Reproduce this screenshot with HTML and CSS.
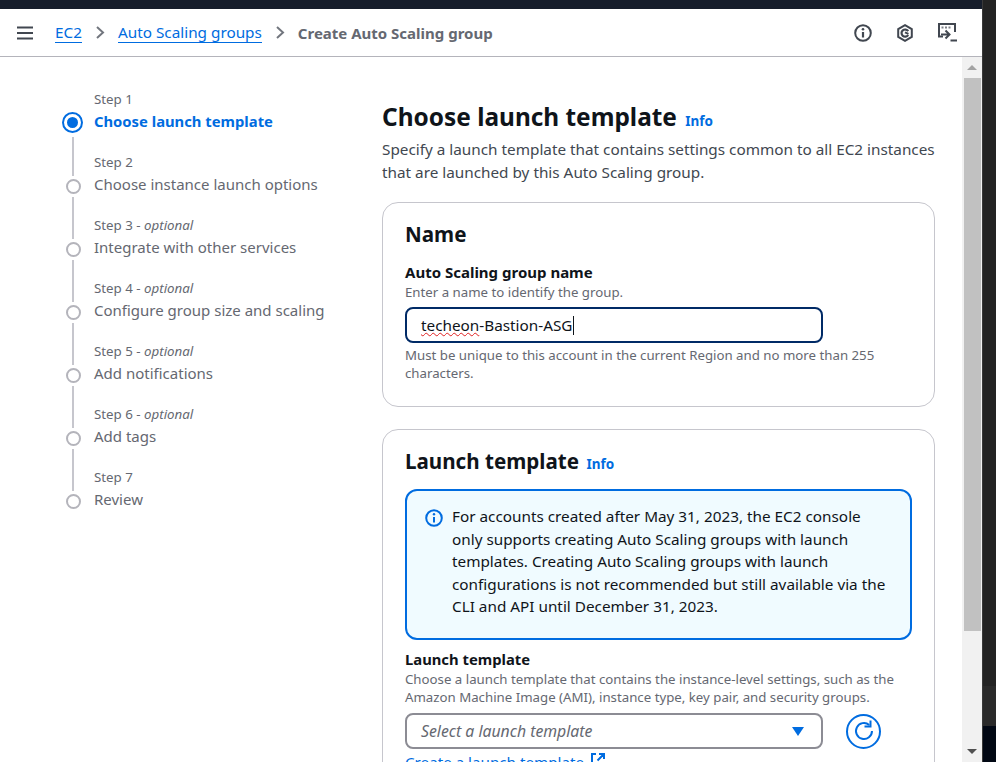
FILE: index.html
```html
<!DOCTYPE html>
<html lang="en">
<head>
    <meta charset="UTF-8">
    <title>Create Auto Scaling group</title>
    <link rel="stylesheet" href="styles.css">
</head>
<body>
    <div class="shell">
        <div class="window">
            <div class="topstrip"></div>
            <div class="console">
                <header class="crumbbar">
                    <svg class="menu-icon" width="16" height="14" viewBox="0 0 16 14"><path d="M0 1.500h16M0 7h16M0 12.500h16" stroke="#414750" stroke-width="2"/></svg>
                    <a class="crumb" href="#">EC2</a>
                    <svg class="chev" width="9" height="13" viewBox="0 0 9 13"><path d="M1 1l6 5.500-6 5.500" fill="none" stroke="#72767e" stroke-width="2"/></svg>
                    <a class="crumb" href="#">Auto Scaling groups</a>
                    <svg class="chev" width="9" height="13" viewBox="0 0 9 13"><path d="M1 1l6 5.500-6 5.500" fill="none" stroke="#72767e" stroke-width="2"/></svg>
                    <span class="crumb-current">Create Auto Scaling group</span>
                    <div class="tools">
                        <svg width="18" height="18" viewBox="0 0 18 18"><circle cx="9" cy="9" r="7.800" fill="none" stroke="#414750" stroke-width="2"/><path d="M9 8v5.500" stroke="#414750" stroke-width="2.200"/><circle cx="9" cy="5.200" r="1.300" fill="#414750"/></svg>
                        <svg width="16" height="18" viewBox="0 0 16 18"><path d="M8 1.200l6.800 3.900v7.800L8 16.800l-6.800-3.900V5.100z" fill="none" stroke="#414750" stroke-width="2"/><path d="M11.200 7.200A3.600 3.600 0 1 0 11.200 11" fill="none" stroke="#414750" stroke-width="2.200"/><path d="M8 8.300l3.500 1.500" stroke="#414750" stroke-width="2"/></svg>
                        <svg width="19" height="19" viewBox="0 0 19 19"><path d="M5 13.500H1V1h16v8" fill="none" stroke="#414750" stroke-width="2"/><path d="M3.500 3.500h2v2h-2zM7 3.500h2v2H7zM10.500 3.500h2v2h-2z" fill="#7d8087"/><path d="M3 11.500h8M7.500 7.500l4 4-4 4" fill="none" stroke="#414750" stroke-width="2"/><path d="M12.500 17.500H19" stroke="#414750" stroke-width="2"/></svg>
                    </div>
                </header>
                <div class="scrollarea">
                    <div class="page">
                        <nav class="steps">
                            <div class="step step-active">
                                <div class="step-label">Step 1</div>
                                <div class="step-title">Choose launch template</div>
                            </div>
                            <div class="step">
                                <div class="step-label">Step 2</div>
                                <div class="step-title">Choose instance launch options</div>
                            </div>
                            <div class="step">
                                <div class="step-label">Step 3 - <i>optional</i></div>
                                <div class="step-title">Integrate with other services</div>
                            </div>
                            <div class="step">
                                <div class="step-label">Step 4 - <i>optional</i></div>
                                <div class="step-title">Configure group size and scaling</div>
                            </div>
                            <div class="step">
                                <div class="step-label">Step 5 - <i>optional</i></div>
                                <div class="step-title">Add notifications</div>
                            </div>
                            <div class="step">
                                <div class="step-label">Step 6 - <i>optional</i></div>
                                <div class="step-title">Add tags</div>
                            </div>
                            <div class="step step-last">
                                <div class="step-label">Step 7</div>
                                <div class="step-title">Review</div>
                            </div>
                        </nav>
                        <main class="content">
                            <h1 class="page-title">Choose launch template <a class="info" href="#">Info</a></h1>
                            <p class="page-desc">Specify a launch template that contains settings common to all EC2 instances that are launched by this Auto Scaling group.</p>

                            <section class="card">
                                <h2 class="card-title">Name</h2>
                                <div class="field-label">Auto Scaling group name</div>
                                <div class="field-hint">Enter a name to identify the group.</div>
                                <div class="name-input"><span class="misspelt">techeon</span>-Bastion-ASG<span class="caret"></span></div>
                                <div class="field-hint">Must be unique to this account in the current Region and no more than 255 characters.</div>
                            </section>

                            <section class="card">
                                <h2 class="card-title card-title-tight">Launch template <a class="info" href="#">Info</a></h2>
                                <div class="alert">
                                    <svg class="alert-icon" width="18" height="18" viewBox="0 0 18 18"><circle cx="9" cy="9" r="7.800" fill="none" stroke="#006ce0" stroke-width="2"/><path d="M9 8v5.500" stroke="#006ce0" stroke-width="2"/><circle cx="9" cy="5.200" r="1.200" fill="#006ce0"/></svg>
                                    <p>For accounts created after May 31, 2023, the EC2 console only supports creating Auto Scaling groups with launch templates. Creating Auto Scaling groups with launch configurations is not recommended but still available via the CLI and API until December 31, 2023.</p>
                                </div>
                                <div class="field-label field-label-small">Launch template</div>
                                <div class="field-hint">Choose a launch template that contains the instance-level settings, such as the Amazon Machine Image (AMI), instance type, key pair, and security groups.</div>
                                <div class="select-row">
                                    <div class="select">
                                        <span>Select a launch template</span>
                                        <svg width="14" height="11" viewBox="0 0 14 11"><path d="M1 1h12L7 10z" fill="#006ce0"/></svg>
                                    </div>
                                    <button class="refresh">
                                        <svg width="24" height="24" viewBox="0 0 24 24"><path d="M20 12a8 8 0 1 1-2.800-6.100" fill="none" stroke="#006ce0" stroke-width="2"/><path d="M18.500 1.500v6h-6" fill="none" stroke="#006ce0" stroke-width="2"/></svg>
                                    </button>
                                </div>
                                <a class="create-link" href="#">Create a launch template</a>
                                <svg class="ext-icon" width="16" height="16" viewBox="0 0 16 16"><path d="M6 2H2v12h12v-4M9 2h5v5M14 2L7.500 8.500" fill="none" stroke="#006ce0" stroke-width="2"/></svg>
                            </section>
                        </main>
                    </div>
                </div>
                <div class="scrollbar">
                    <div class="arrow arrow-up"></div>
                    <div class="track"><div class="thumb"></div></div>
                    <div class="arrow arrow-down"></div>
                </div>
            </div>
        </div>
        <div class="rail">
            <div class="rail-top"></div>
            <div class="rail-mid"></div>
            <div class="rail-bottom"></div>
        </div>
    </div>
</body>
</html>
```
FILE: styles.css
```css
html, body {
    margin: 0;
    padding: 0;
    height: 100%;
    overflow: hidden;
    background-color: #232323;
    font-family: "Noto Sans", sans-serif;
    color: #0f141a;
}
.shell {
    display: flex;
    height: 100%;
}
.window {
    width: 982px;
    flex: none;
    display: flex;
    flex-direction: column;
}
.topstrip {
    height: 9px;
    flex: none;
    background-color: #161d2b;
}
.rail {
    flex: 1;
    display: flex;
    flex-direction: column;
    border-left: 1px solid #3a3a3a;
}
.rail-top {
    height: 686px;
    background-color: #232323;
}
.rail-mid {
    height: 40px;
    background-color: #2a2a2a;
}
.rail-bottom {
    flex: 1;
    background-color: #020814;
}
.console {
    position: relative;
    flex: 1;
    background-color: #fff;
    overflow: hidden;
}
.crumbbar {
    display: flex;
    align-items: center;
    height: 48px;
    padding: 0 25px 0 17px;
    border-bottom: 1px solid #b4b4bb;
    box-sizing: border-box;
}
.menu-icon {
    margin-right: 22px;
}
.crumb {
    font-size: 15.300px;
    color: #006ce0;
    text-decoration: none;
    border-bottom: 1px solid #006ce0;
}
.chev {
    margin: 0 13px 0 14px;
}
.crumb-current {
    font-size: 15px;
    font-weight: 700;
    color: #656871;
}
.tools {
    margin-left: auto;
    display: flex;
    align-items: center;
    gap: 25px;
}
.scrollarea {
    height: 705px;
    overflow: hidden;
}
.page {
    display: flex;
    padding: 33px 47px 0 62px;
}
.steps {
    width: 320px;
    flex: none;
}
.step {
    position: relative;
    height: 63px;
    padding-left: 32px;
    box-sizing: border-box;
}
.step::before {
    content: "";
    position: absolute;
    left: 4px;
    top: 26px;
    width: 11px;
    height: 11px;
    border: 2px solid #b4b4bb;
    border-radius: 50%;
    background-color: #fff;
}
.step::after {
    content: "";
    position: absolute;
    left: 10px;
    top: 44px;
    width: 2px;
    height: 42px;
    background-color: #c6c6cd;
}
.step-last::after {
    display: none;
}
.step-active::before {
    left: 2px;
    top: 24px;
    border: 3.500px solid #fff;
    outline: 2px solid #006ce0;
    background-color: #006ce0;
}
.step-active::after {
    top: 47px;
    height: 39px;
}
.step-label {
    font-size: 13.300px;
    line-height: 18px;
    color: #656871;
}
.step-title {
    font-size: 15px;
    line-height: 24px;
    margin-top: 1px;
    color: #656871;
}
.step-active .step-title {
    font-size: 14.800px;
    font-weight: 700;
    color: #006ce0;
}
.content {
    flex: 1;
    min-width: 0;
    padding-top: 9px;
}
.page-title {
    margin: 0 0 -1px;
    font-size: 24.400px;
    line-height: 35px;
    font-weight: 700;
}
.info {
    font-size: 13.500px;
    font-weight: 700;
    color: #006ce0;
    text-decoration: none;
    margin-left: 2px;
}
.page-desc {
    margin: 0 0 18px;
    font-size: 15.300px;
    line-height: 23px;
    color: #414750;
}
.card {
    border: 1px solid #c6c6cd;
    border-radius: 16px;
    padding: 15px 22px 24px;
    margin-bottom: 22px;
}
.card-title {
    margin: 0 0 12px;
    font-size: 20.600px;
    line-height: 32px;
    font-weight: 700;
}
.card-title-tight {
    margin-bottom: 9px;
}
.field-label {
    font-size: 15px;
    line-height: 21px;
    font-weight: 700;
}
.field-label-small {
    font-size: 14.800px;
}
.field-hint {
    font-size: 13.250px;
    line-height: 18px;
    color: #656871;
}
.name-input {
    display: flex;
    align-items: center;
    width: 418px;
    height: 36px;
    box-sizing: border-box;
    margin: 6px 0 3px;
    padding-left: 14px;
    border: 2px solid #002a66;
    border-radius: 8px;
    font-size: 15.300px;
}
.misspelt {
    text-decoration: underline wavy #e02020 1px;
}
.caret {
    display: inline-block;
    width: 1px;
    height: 19px;
    background-color: #0f141a;
}
.alert {
    display: flex;
    gap: 9px;
    padding: 14px 22px 20.500px 18px;
    margin-bottom: 9px;
    border: 2px solid #006ce0;
    border-radius: 12px;
    background-color: #f0fbff;
}
.alert-icon {
    flex: none;
    margin-top: 4px;
}
.alert p {
    margin: 0;
    font-size: 15.300px;
    line-height: 22.500px;
    color: #0f141a;
}
.select-row {
    display: flex;
    align-items: center;
    gap: 23px;
    margin-top: 7px;
}
.select {
    display: flex;
    align-items: center;
    justify-content: space-between;
    width: 418px;
    height: 36px;
    box-sizing: border-box;
    padding: 0 16px 0 14px;
    border: 2px solid #8c8c94;
    border-radius: 8px;
    font-size: 15.800px;
    font-style: italic;
    color: #656871;
}
.refresh {
    display: flex;
    align-items: center;
    justify-content: center;
    width: 35px;
    height: 35px;
    padding: 0;
    border: 2px solid #006ce0;
    border-radius: 50%;
    background-color: #fff;
}
.create-link {
    display: inline-block;
    margin-top: 3px;
    font-size: 15.200px;
    color: #006ce0;
}
.ext-icon {
    margin-left: 2px;
}
.scrollbar {
    position: absolute;
    right: 0;
    top: 48px;
    bottom: 0;
    width: 20px;
    display: flex;
    flex-direction: column;
    background-color: #f1f1f1;
}
.arrow {
    height: 21px;
    flex: none;
    position: relative;
}
.arrow::after {
    content: "";
    position: absolute;
    left: 5px;
    border-left: 5px solid transparent;
    border-right: 5px solid transparent;
}
.arrow-up::after {
    top: 8px;
    border-bottom: 5px solid #a3a3a3;
}
.arrow-down::after {
    bottom: 8px;
    border-top: 5px solid #505050;
}
.track {
    flex: 1;
    padding: 0 1px 0 2px;
}
.thumb {
    height: 553px;
    background-color: #c1c1c1;
}
```
